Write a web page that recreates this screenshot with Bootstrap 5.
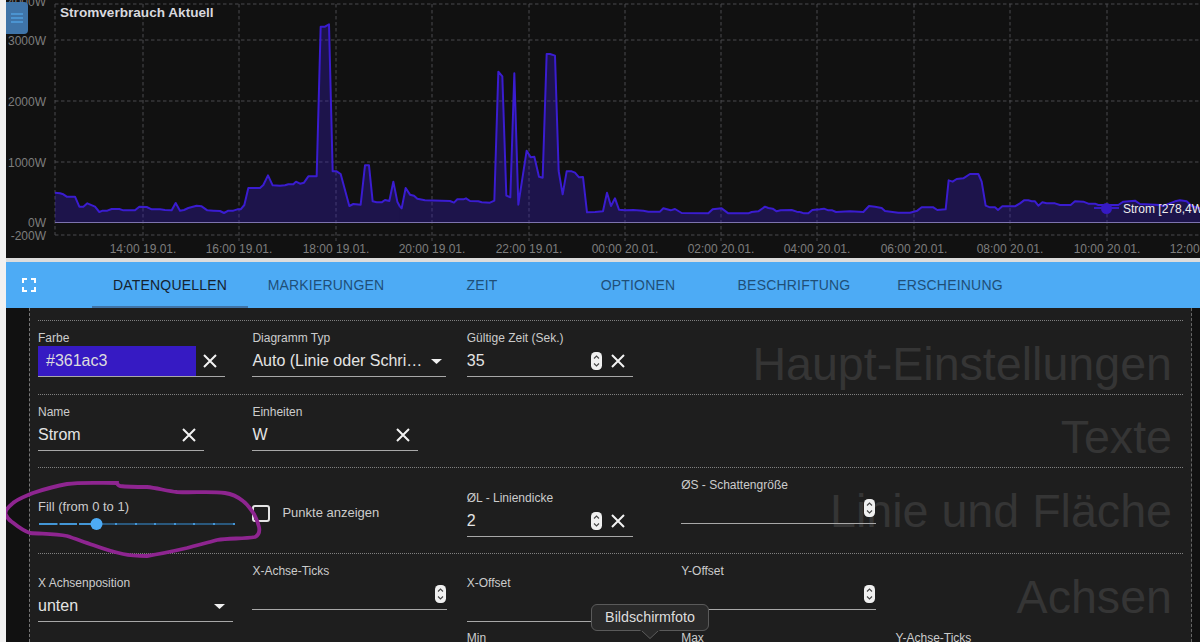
<!DOCTYPE html>
<html lang="de">
<head>
<meta charset="utf-8">
<title>Stromverbrauch</title>
<link href="https://cdn.jsdelivr.net/npm/bootstrap@5.3.0/dist/css/bootstrap.min.css" rel="stylesheet">
<style>
html,body{height:642px;overflow:hidden;}
body{background:#f1f1f1;font-family:"Liberation Sans",Arial,sans-serif;padding-left:6px;color:#ddd;}
.app-frame{width:1194px;height:642px;position:relative;overflow:hidden;}
.chart-box{height:258px;background:#111;position:relative;display:block;}
.chart-svg{display:block;width:1194px;height:258px;}
.axis-t{font-family:"Liberation Sans",Arial,sans-serif;font-size:12px;fill:#7d7d7d;}
.chart-title{font-family:"Liberation Sans",Arial,sans-serif;font-size:13.6px;font-weight:700;fill:#d8d8de;}
.legend-t{font-family:"Liberation Sans",Arial,sans-serif;font-size:12px;fill:#eee;}
.grid-l{stroke:#4a4a4e;stroke-width:1;stroke-dasharray:3.5 2.5;fill:none;}
.area-p{fill:#361ac3;fill-opacity:.33;stroke:none;}
.line-p{fill:none;stroke:#3a1cd0;stroke-width:6;stroke-linejoin:round;}
.menu-btn{position:absolute;left:0;top:2px;width:22px;height:32px;background:#3f74a8;border-radius:0 4px 4px 0;display:flex;align-items:center;justify-content:center;}
.gap-strip{height:4px;background:#dcdcdc;}
.tool-bar{height:46px;background:#4dabf5;}
.full-ico{width:14px;height:14px;margin-left:16px;margin-right:56px;flex:none;}
.tab-it{width:156px;height:46px;display:flex;align-items:center;justify-content:center;font-size:14px;letter-spacing:.2px;color:#1f4f78;text-transform:uppercase;text-decoration:none;}
.tab-it.tab-on{color:#15222e;border-bottom:2px solid #3f74a8;padding-top:2px;}
.lower-pane{height:334px;background:#111;position:relative;overflow:hidden;}
.form-pane{position:absolute;left:23px;top:0;right:8px;bottom:0;background:#1e1e1e;border-left:1px dashed #777;border-right:1px dashed #666;padding:12px 8px 0 8px;}
.cfg-row{position:relative;border-top:1px dotted #808080;display:flex;}
.row-a{height:74px;}
.row-b{height:73px;}
.row-c{height:86px;}
.row-d{height:76px;}
.wm-text{position:absolute;right:11px;font-size:46.6px;line-height:50px;color:#353535;white-space:nowrap;}
.wm-a{top:18px;}
.wm-b{top:17px;}
.wm-c{top:18px;}
.wm-d{top:18px;}
.fld-slot{width:214.4px;flex:none;padding-top:10px;position:relative;}
.fld-slot.fld-low{padding-top:23px;}
.fld-slot.fld-lowx{padding-top:22px;}
.fld-slot.fld-end{padding-top:2px;}
.fld-lab{font-size:12px;line-height:14px;color:#ccc;white-space:nowrap;}
.fill-lab{font-size:13px;margin-top:9px;}
.fld-ctl{height:32px;padding-top:1px;border-bottom:1px solid #a8a8a8;display:flex;align-items:center;font-size:16px;color:#e4e4e4;position:relative;}
.fld-val{flex:1;min-width:0;white-space:nowrap;overflow:hidden;}
.w-187{width:187px;}.w-166{width:166px;}.w-194{width:194px;}.w-195{width:195px;}
.clr-val{background:#361ac3;height:30px;width:158px;flex:none;padding-left:8px;line-height:30px;color:#ddd;align-self:flex-start;}
.clr-fill{flex:1;}
.ico-x{width:14px;height:14px;flex:none;}
.ico-spin{width:11px;height:18px;flex:none;margin-right:1px;}
.ico-caret{width:11px;height:5px;flex:none;}
.gap-x1{margin-right:8px;}
.chk-box{width:18px;height:17px;border:2px solid #e4e4e4;border-radius:3px;flex:none;}
.chk-line{font-size:13px;color:#ccc;margin-left:12px;}
.chk-wrap{height:46px;margin-top:12px;}
.slide-svg{display:block;width:197px;height:14px;margin-top:3px;}
.ink-layer{position:absolute;left:-6px;top:-308px;width:1200px;height:642px;pointer-events:none;z-index:3;}
.tip-box{position:absolute;left:585px;top:296px;width:118px;height:27px;background:#2a2a2a;border:1px solid #5a5a5a;border-radius:6px;color:#ddd;font-size:14.3px;display:flex;align-items:center;justify-content:center;z-index:4;}
.tip-arrow{position:absolute;left:634px;top:322px;width:20px;height:9px;z-index:5;display:block;}
</style>
</head>
<body>
<svg width="0" height="0" class="position-absolute">
  <defs>
    <symbol id="i-x" viewBox="0 0 14 14"><path d="M1 1L13 13M13 1L1 13" stroke="#f2f2f2" stroke-width="2" fill="none"/></symbol>
    <symbol id="i-spin" viewBox="0 0 11 18"><rect width="11" height="18" rx="4.5" fill="#f0f0f0"/><path d="M3 6.500L5.500 4L8 6.500M3 11.500L5.500 14L8 11.500" stroke="#444" stroke-width="1.100" fill="none"/></symbol>
    <symbol id="i-caret" viewBox="0 0 11 5"><path d="M0 0H11L5.500 5Z" fill="#f0f0f0"/></symbol>
  </defs>
</svg>
<div class="app-frame">
  <div class="chart-box">
    <svg class="chart-svg" viewBox="6 0 1194 258" xmlns="http://www.w3.org/2000/svg">
      <g class="grid-l">
        <path d="M55 4H1200M55 40H1200M55 101H1200M55 162H1200M55 235H1200"/>
        <path d="M55 4V235M143 4V241M239 4V241M336 4V241M432 4V241M529 4V241M625 4V241M721 4V241M817 4V241M914 4V241M1010 4V241M1107 4V241"/>
      </g>
      <g transform="scale(.33333)">
        <path class="area-p" d="M165 667V578L180 580L190 583L200 590L225 590L238 620L250 620L262 610L285 620L298 636L308 632L322 632L335 627L358 627L370 631L405 631L418 620L440 621L455 628L480 628L495 630L515 631L527 609L540 632L552 630L565 624L590 617L605 619L622 631L640 632L660 633L672 639L685 632L700 632L712 628L722 628L733 615L745 564L780 564L790 555L804 526L818 556L840 557L855 556L865 553L880 553L888 545L900 551L912 548L925 529L950 529L962 80L975 80L987 73L998 514L1010 514L1022 522L1048 618L1060 612L1082 614L1095 496L1107 496L1118 604L1130 607L1145 607L1155 600L1168 603L1180 545L1192 605L1200 620V667Z"/>
        <path class="line-p" d="M165 578L180 580L190 583L200 590L225 590L238 620L250 620L262 610L285 620L298 636L308 632L322 632L335 627L358 627L370 631L405 631L418 620L440 621L455 628L480 628L495 630L515 631L527 609L540 632L552 630L565 624L590 617L605 619L622 631L640 632L660 633L672 639L685 632L700 632L712 628L722 628L733 615L745 564L780 564L790 555L804 526L818 556L840 557L855 556L865 553L880 553L888 545L900 551L912 548L925 529L950 529L962 80L975 80L987 73L998 514L1010 514L1022 522L1048 618L1060 612L1082 614L1095 496L1107 496L1118 604L1130 607L1145 607L1155 600L1168 603L1180 545L1192 605L1200 620"/>
        <g transform="translate(1200 0)">
          <path class="area-p" d="M0 667V620L5 625L17 564L30 584L42 587L52 596L75 601L150 603L162 608L172 598L190 598L198 595L210 603L235 604L245 607L270 608L283 602L295 215L307 229L319 587L331 592L343 220L355 614L380 452L392 472L403 470L417 530L428 533L440 162L450 162L465 167L476 513L488 583L500 514L515 514L525 518L537 532L549 531L561 637L585 636L609 634L621 578L633 618L645 595L657 629L675 631L700 630L730 632L745 635L780 635L790 625L812 631L825 627L845 639L925 640L938 628L965 625L985 640L1045 640L1055 636L1075 634L1095 620L1105 624L1118 626L1130 634L1142 631L1175 630L1190 635L1200 636V667Z"/>
          <path class="line-p" d="M0 620L5 625L17 564L30 584L42 587L52 596L75 601L150 603L162 608L172 598L190 598L198 595L210 603L235 604L245 607L270 608L283 602L295 215L307 229L319 587L331 592L343 220L355 614L380 452L392 472L403 470L417 530L428 533L440 162L450 162L465 167L476 513L488 583L500 514L515 514L525 518L537 532L549 531L561 637L585 636L609 634L621 578L633 618L645 595L657 629L675 631L700 630L730 632L745 635L780 635L790 625L812 631L825 627L845 639L925 640L938 628L965 625L985 640L1045 640L1055 636L1075 634L1095 620L1105 624L1118 626L1130 634L1142 631L1175 630L1190 635L1200 636"/>
        </g>
        <g transform="translate(2400 0)">
          <path class="area-p" d="M0 667V636L12 640L25 640L37 630L60 628L72 626L85 631L97 631L108 636L150 634L190 636L207 618L225 620L245 624L255 633L295 638L330 638L352 632L365 622L400 622L412 630L437 628L446 541L458 545L470 537L490 535L510 522L535 522L545 545L557 617L570 622L585 622L594 630L607 619L645 619L660 610L672 601L685 601L695 604L705 604L715 617L727 607L740 610L765 610L780 615L812 615L825 604L850 605L865 611L885 611L895 615L955 615L970 605L1005 602L1020 612L1080 615L1090 618L1125 604L1140 601L1160 604L1175 618L1200 625V667Z"/>
          <path class="line-p" d="M0 636L12 640L25 640L37 630L60 628L72 626L85 631L97 631L108 636L150 634L190 636L207 618L225 620L245 624L255 633L295 638L330 638L352 632L365 622L400 622L412 630L437 628L446 541L458 545L470 537L490 535L510 522L535 522L545 545L557 617L570 622L585 622L594 630L607 619L645 619L660 610L672 601L685 601L695 604L705 604L715 617L727 607L740 610L765 610L780 615L812 615L825 604L850 605L865 611L885 611L895 615L955 615L970 605L1005 602L1020 612L1080 615L1090 618L1125 604L1140 601L1160 604L1175 618L1200 625"/>
        </g>
      </g>
      <path d="M55 222.500H1200" stroke="#7d74ae" stroke-width="1.200"/>
      <g class="axis-t" text-anchor="end">
        <text x="46" y="6">4000W</text>
        <text x="46" y="45">3000W</text>
        <text x="46" y="106">2000W</text>
        <text x="46" y="167">1000W</text>
        <text x="46" y="227">0W</text>
        <text x="46" y="240">-200W</text>
      </g>
      <g class="axis-t" text-anchor="middle">
        <text x="143" y="253">14:00 19.01.</text>
        <text x="239" y="253">16:00 19.01.</text>
        <text x="336" y="253">18:00 19.01.</text>
        <text x="432" y="253">20:00 19.01.</text>
        <text x="529" y="253">22:00 19.01.</text>
        <text x="625" y="253">00:00 20.01.</text>
        <text x="721" y="253">02:00 20.01.</text>
        <text x="817" y="253">04:00 20.01.</text>
        <text x="914" y="253">06:00 20.01.</text>
        <text x="1010" y="253">08:00 20.01.</text>
        <text x="1107" y="253">10:00 20.01.</text>
        <text x="1203" y="253">12:00 20.01.</text>
      </g>
      <text class="chart-title" x="60" y="17">Stromverbrauch Aktuell</text>
      <path d="M1094 208H1119" stroke="#361ac3" stroke-width="2"/>
      <circle cx="1106.500" cy="208.500" r="5.500" fill="#361ac3"/>
      <text class="legend-t" x="1123" y="213">Strom [278,4W]</text>
    </svg>
    <div class="menu-btn">
      <svg width="12" height="10" viewBox="0 0 12 10"><path d="M0 1H12M0 5H12M0 9H12" stroke="#58b4fa" stroke-width="1.200"/></svg>
    </div>
  </div>
  <div class="gap-strip"></div>
  <nav class="tool-bar d-flex align-items-center">
    <svg class="full-ico" viewBox="0 0 14 14"><path d="M1 5V1H5M9 1H13V5M13 9V13H9M5 13H1V9" stroke="#fff" stroke-width="2" fill="none"/></svg>
    <a class="tab-it tab-on" href="#">Datenquellen</a>
    <a class="tab-it" href="#">Markierungen</a>
    <a class="tab-it" href="#">Zeit</a>
    <a class="tab-it" href="#">Optionen</a>
    <a class="tab-it" href="#">Beschriftung</a>
    <a class="tab-it" href="#">Erscheinung</a>
  </nav>
  <div class="lower-pane">
    <div class="form-pane">
      <div class="cfg-row row-a">
        <span class="wm-text wm-a">Haupt-Einstellungen</span>
        <div class="fld-slot">
          <div class="fld-lab">Farbe</div>
          <div class="fld-ctl w-187"><div class="clr-val">#361ac3</div><div class="clr-fill"></div><svg class="ico-x gap-x1"><use href="#i-x"/></svg></div>
        </div>
        <div class="fld-slot">
          <div class="fld-lab">Diagramm Typ</div>
          <div class="fld-ctl w-194"><span class="fld-val">Auto (Linie oder Schri…</span><svg class="ico-caret ms-2 me-1"><use href="#i-caret"/></svg></div>
        </div>
        <div class="fld-slot">
          <div class="fld-lab">Gültige Zeit (Sek.)</div>
          <div class="fld-ctl w-166"><span class="fld-val">35</span><svg class="ico-spin"><use href="#i-spin"/></svg><svg class="ico-x gap-x1 ms-2"><use href="#i-x"/></svg></div>
        </div>
      </div>
      <div class="cfg-row row-b">
        <span class="wm-text wm-b">Texte</span>
        <div class="fld-slot">
          <div class="fld-lab">Name</div>
          <div class="fld-ctl w-166"><span class="fld-val">Strom</span><svg class="ico-x gap-x1"><use href="#i-x"/></svg></div>
        </div>
        <div class="fld-slot">
          <div class="fld-lab">Einheiten</div>
          <div class="fld-ctl w-166"><span class="fld-val">W</span><svg class="ico-x gap-x1"><use href="#i-x"/></svg></div>
        </div>
      </div>
      <div class="cfg-row row-c">
        <span class="wm-text wm-c">Linie und Fläche</span>
        <div class="fld-slot fld-low">
          <div class="fld-lab fill-lab">Fill (from 0 to 1)</div>
          <svg class="slide-svg" viewBox="0 0 197 14">
            <path d="M1 7H197" stroke="#2f6c9c" stroke-width="1.500"/>
            <path d="M1 7H58" stroke="#4dabf5" stroke-width="1.500"/>
            <path d="M20.500 6V8M40 6V8" stroke="#1e1e1e" stroke-width="2"/>
            <path d="M78 6V8M98 6V8M117 6V8M137 6V8M156 6V8M176 6V8M196 6V8" stroke="#4dabf5" stroke-width="1.500"/>
            <circle cx="58.500" cy="7" r="6" fill="#4dabf5"/>
          </svg>
        </div>
        <div class="fld-slot">
          <div class="chk-wrap d-flex align-items-center">
            <span class="chk-box"></span><span class="chk-line">Punkte anzeigen</span>
          </div>
        </div>
        <div class="fld-slot fld-low">
          <div class="fld-lab">ØL - Liniendicke</div>
          <div class="fld-ctl w-166"><span class="fld-val">2</span><svg class="ico-spin"><use href="#i-spin"/></svg><svg class="ico-x gap-x1 ms-2"><use href="#i-x"/></svg></div>
        </div>
        <div class="fld-slot">
          <div class="fld-lab">ØS - Schattengröße</div>
          <div class="fld-ctl w-195"><span class="fld-val"></span><svg class="ico-spin"><use href="#i-spin"/></svg></div>
        </div>
      </div>
      <div class="cfg-row row-d">
        <span class="wm-text wm-d">Achsen</span>
        <div class="fld-slot fld-lowx">
          <div class="fld-lab">X Achsenposition</div>
          <div class="fld-ctl w-195"><span class="fld-val">unten</span><svg class="ico-caret ms-2 me-2"><use href="#i-caret"/></svg></div>
        </div>
        <div class="fld-slot">
          <div class="fld-lab">X-Achse-Ticks</div>
          <div class="fld-ctl w-195"><span class="fld-val"></span><svg class="ico-spin"><use href="#i-spin"/></svg></div>
        </div>
        <div class="fld-slot fld-lowx">
          <div class="fld-lab">X-Offset</div>
          <div class="fld-ctl w-195"><span class="fld-val"></span></div>
        </div>
        <div class="fld-slot">
          <div class="fld-lab">Y-Offset</div>
          <div class="fld-ctl w-195"><span class="fld-val"></span><svg class="ico-spin"><use href="#i-spin"/></svg></div>
        </div>
      </div>
      <div class="d-flex">
        <div class="fld-slot fld-end"></div>
        <div class="fld-slot fld-end"></div>
        <div class="fld-slot fld-end"><div class="fld-lab">Min</div></div>
        <div class="fld-slot fld-end"><div class="fld-lab">Max</div></div>
        <div class="fld-slot fld-end"><div class="fld-lab">Y-Achse-Ticks</div></div>
      </div>
    </div>
    <svg class="ink-layer" viewBox="0 0 1200 642">
      <path d="M117 483C100 483 80 482 67 484C55 486 45 489 33 493C24 497 17 499 12 504C7 508 5 511 5.500 514C7 518 9 520 12 522C17 526 23 531 30 533C44 534 56 534 67 536C76 539 84 542 93 545C104 549 113 552 123 554C132 556 140 556 147 556C160 554 174 551 187 548C197 545 207 543 217 540C229 538 243 539 255 537C259 535 260 532 259 527C258 522 256 518 254 514C250 508 247 504 243 501C238 497 232 494 225 493C210 491 192 493 177 492C167 491 157 488 147 487C138 487 128 487 120 486C118 485 117 484 117 483Z" fill="none" stroke="#8e2590" stroke-width="3.800"/>
    </svg>
    <div class="tip-box">Bildschirmfoto</div>
    <svg class="tip-arrow" viewBox="0 0 20 9"><path d="M0 0H20L10 9Z" fill="#2a2a2a"/><path d="M2 1L10 8.500L18 1" stroke="#5a5a5a" fill="none"/></svg>
  </div>
</div>
<script src="https://cdn.jsdelivr.net/npm/bootstrap@5.3.0/dist/js/bootstrap.bundle.min.js"></script>
</body>
</html>
